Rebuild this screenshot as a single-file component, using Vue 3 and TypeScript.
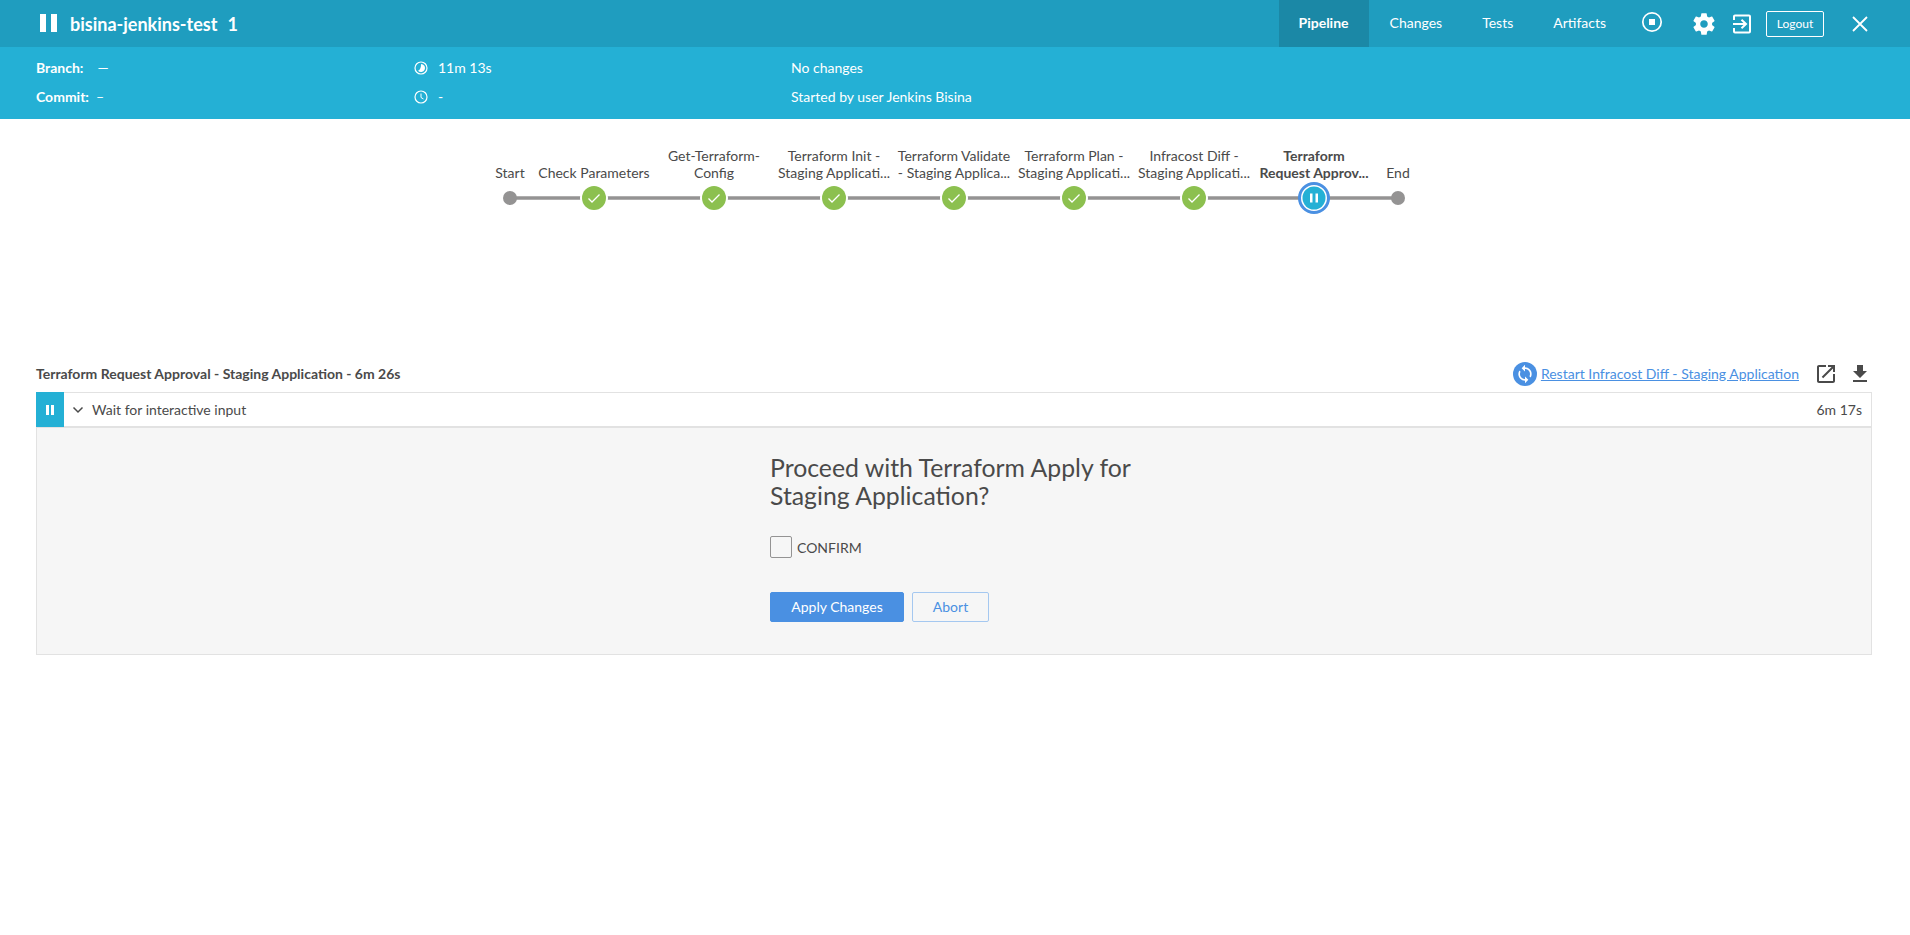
<script setup lang="ts">
interface Stage {
  x: number;
  lines: string[];
  kind: "terminal" | "done" | "paused";
}

const stages: Stage[] = [
  { x: 0, lines: ["Start"], kind: "terminal" },
  { x: 84, lines: ["Check Parameters"], kind: "done" },
  { x: 204, lines: ["Get-Terraform-", "Config"], kind: "done" },
  { x: 324, lines: ["Terraform Init -", "Staging Applicati..."], kind: "done" },
  { x: 444, lines: ["Terraform Validate", "- Staging Applica..."], kind: "done" },
  { x: 564, lines: ["Terraform Plan -", "Staging Applicati..."], kind: "done" },
  { x: 684, lines: ["Infracost Diff -", "Staging Applicati..."], kind: "done" },
  { x: 804, lines: ["Terraform", "Request Approv..."], kind: "paused" },
  { x: 888, lines: ["End"], kind: "terminal" },
];

const tabs = ["Pipeline", "Changes", "Tests", "Artifacts"];
</script>

<template>
  <div class="page">
    <header class="top">
      <div class="top-bar">
        <svg class="run-pause" width="18" height="18" viewBox="0 0 18 18">
          <rect x="0" y="0" width="6" height="18" fill="#fff" />
          <rect x="11" y="0" width="6" height="18" fill="#fff" />
        </svg>
        <h1 class="title">bisina-jenkins-test<span class="run-no">1</span></h1>
        <nav class="tabs">
          <a v-for="(t, i) in tabs" :key="t" class="tab" :class="{ active: i === 0 }">{{ t }}</a>
        </nav>
        <div class="actions">
          <svg class="stop" width="24" height="24" viewBox="0 0 24 24">
            <circle cx="12" cy="12" r="9.2" fill="none" stroke="#fff" stroke-width="1.7" />
            <rect x="9" y="9" width="6" height="6" fill="#fff" />
          </svg>
          <svg class="gear" width="26" height="26" viewBox="0 0 24 24">
            <path fill="#fff" d="M19.43 12.98c.04-.32.07-.64.07-.98s-.03-.66-.07-.98l2.11-1.65c.19-.15.24-.42.12-.64l-2-3.46c-.12-.22-.39-.3-.61-.22l-2.49 1c-.52-.4-1.08-.73-1.69-.98l-.38-2.65C14.46 2.18 14.25 2 14 2h-4c-.25 0-.46.18-.49.42l-.38 2.65c-.61.25-1.17.59-1.69.98l-2.49-1c-.23-.09-.49 0-.61.22l-2 3.46c-.13.22-.07.49.12.64l2.11 1.65c-.04.32-.07.65-.07.98s.03.66.07.98l-2.11 1.65c-.19.15-.24.42-.12.64l2 3.46c.12.22.39.3.61.22l2.49-1c.52.4 1.08.73 1.69.98l.38 2.65c.03.24.24.42.49.42h4c.25 0 .46-.18.49-.42l.38-2.65c.61-.25 1.17-.59 1.69-.98l2.49 1c.23.09.49 0 .61-.22l2-3.46c.12-.22.07-.49-.12-.64l-2.11-1.65zM12 15.5c-1.93 0-3.5-1.57-3.5-3.5s1.57-3.5 3.5-3.5 3.5 1.57 3.5 3.5-1.57 3.5-3.5 3.5z" />
          </svg>
          <svg class="login" width="20" height="20" viewBox="0 0 20 20" fill="none" stroke="#fff" stroke-width="2">
            <path d="M2 6V2.5a1 1 0 0 1 1-1h14a1 1 0 0 1 1 1v15a1 1 0 0 1-1 1H3a1 1 0 0 1-1-1V14" />
            <path d="M1 10h12M9.5 5.8 14 10l-4.500 4.200" />
          </svg>
          <button class="logout">Logout</button>
          <svg class="close" width="16" height="16" viewBox="0 0 16 16" stroke="#fff" stroke-width="1.800">
            <path d="M1 1l14 14M15 1 1 15" />
          </svg>
        </div>
      </div>
      <div class="meta">
        <div class="meta-col col-a">
          <div><b>Branch:</b><span class="dash dash-a">—</span></div>
          <div><b>Commit:</b><span class="dash">–</span></div>
        </div>
        <div class="meta-col col-b">
          <div class="with-icon">
            <svg width="14" height="14" viewBox="0 0 14 14">
              <circle cx="7" cy="7" r="6" fill="none" stroke="#fff" stroke-width="1.200" />
              <path fill="#fff" d="M7 3a4 4 0 1 1-3 6.700C6 9 7 7 7 3z" />
            </svg>
            <span>11m 13s</span>
          </div>
          <div class="with-icon">
            <svg width="14" height="14" viewBox="0 0 14 14" fill="none" stroke="#fff">
              <circle cx="7" cy="7" r="6" stroke-width="1.200" />
              <path d="M7 3.500V7.500L9.500 9" stroke-width="1" />
            </svg>
            <span>-</span>
          </div>
        </div>
        <div class="meta-col">
          <div>No changes</div>
          <div>Started by user Jenkins Bisina</div>
        </div>
      </div>
    </header>

    <section class="graph-wrap">
      <div class="graph">
        <svg class="graph-lines" width="920" height="40" viewBox="0 0 920 40">
          <line x1="16" y1="20" x2="904" y2="20" stroke="#949393" stroke-width="3.500" />
          <template v-for="s in stages" :key="s.x">
            <circle v-if="s.kind === 'terminal'" :cx="s.x + 16" cy="20" r="7" fill="#949393" />
            <g v-else-if="s.kind === 'done'">
              <circle :cx="s.x + 16" cy="20" r="14" fill="#fff" />
              <circle :cx="s.x + 16" cy="20" r="12" fill="#8cc04f" />
              <path :transform="`translate(${s.x + 16} 20)`" d="M-5.500 0.500-2 4 5.500-3.500" fill="none" stroke="#fff" stroke-width="1.300" />
            </g>
            <g v-else>
              <circle :cx="s.x + 16" cy="20" r="15" fill="#fff" />
              <circle :cx="s.x + 16" cy="20" r="14.500" fill="none" stroke="#4a90e2" stroke-width="3" />
              <circle :cx="s.x + 16" cy="20" r="11.500" fill="#24b0d5" />
              <rect :x="s.x + 12" y="15.500" width="2.500" height="9" fill="#fff" />
              <rect :x="s.x + 17.500" y="15.500" width="2.500" height="9" fill="#fff" />
            </g>
          </template>
        </svg>
        <div
          v-for="s in stages"
          :key="'l' + s.x"
          class="stage-label"
          :class="{ current: s.kind === 'paused' }"
          :style="{ left: s.x + 16 + 'px' }"
        >
          <div v-for="l in s.lines" :key="l">{{ l }}</div>
        </div>
      </div>
    </section>

    <section class="detail">
      <div class="detail-head">
        <h2 class="detail-title">Terraform Request Approval - Staging Application - 6m 26s</h2>
        <div class="detail-tools">
          <span class="restart-badge">
            <svg width="20" height="20" viewBox="0 0 24 24">
              <path fill="#fff" d="M12 4V1L8 5l4 4V6c3.310 0 6 2.690 6 6 0 1.010-.25 1.970-.7 2.800l1.460 1.460C19.540 15.030 20 13.570 20 12c0-4.420-3.580-8-8-8zm0 14c-3.310 0-6-2.690-6-6 0-1.010.25-1.970.7-2.800L5.240 7.740C4.460 8.970 4 10.430 4 12c0 4.420 3.580 8 8 8v3l4-4-4-4v3z" />
            </svg>
          </span>
          <a class="restart-link">Restart Infracost Diff - Staging Application</a>
          <svg class="tool first" width="24" height="24" viewBox="0 0 24 24">
            <path fill="#4a4a4a" d="M19 19H5V5h7V3H5c-1.110 0-2 .9-2 2v14c0 1.100.89 2 2 2h14c1.100 0 2-.9 2-2v-7h-2v7zM14 3v2h3.590l-9.830 9.830 1.410 1.410L19 6.410V10h2V3h-7z" />
          </svg>
          <svg class="tool" width="24" height="24" viewBox="0 0 24 24">
            <path fill="#4a4a4a" d="M19 9h-4V3H9v6H5l7 7 7-7zM5 18v2h14v-2H5z" />
          </svg>
        </div>
      </div>

      <div class="step">
        <div class="step-status">
          <svg width="8" height="10" viewBox="0 0 8 10">
            <rect x="0" y="0" width="3" height="10" fill="#fff" />
            <rect x="5" y="0" width="3" height="10" fill="#fff" />
          </svg>
        </div>
        <svg class="chevron" width="12" height="8" viewBox="0 0 12 8" fill="none" stroke="#4a4a4a" stroke-width="1.500">
          <path d="M1.500 1.500 6 6l4.500-4.500" />
        </svg>
        <span class="step-name">Wait for interactive input</span>
        <span class="step-time">6m 17s</span>
      </div>

      <div class="input-panel">
        <h3 class="question">Proceed with Terraform Apply for<br />Staging Application?</h3>
        <label class="confirm">
          <span class="box"></span>
          <span>CONFIRM</span>
        </label>
        <div class="buttons">
          <button class="btn primary">Apply Changes</button>
          <button class="btn secondary">Abort</button>
        </div>
      </div>
    </section>
  </div>
</template>

<style>
html,
body {
  margin: 0;
  background: #fff;
}
</style>

<style scoped>
.page {
  font-family: Lato, "Noto Sans", sans-serif;
  font-size: 14px;
  color: #4a4a4a;
  min-height: 935px;
}
.top {
  background: #24b0d5;
  color: #fff;
}
.top-bar {
  display: flex;
  align-items: center;
  height: 47px;
  background: #1f9dbf;
  padding-left: 40px;
}
.run-pause {
  margin-bottom: 2px;
}
.title {
  margin: 0 0 0 12px;
  font-size: 18px;
  font-weight: 700;
  line-height: 46px;
}
.run-no {
  margin-left: 10px;
}
.tabs {
  display: flex;
  margin-left: auto;
  height: 47px;
}
.tab {
  display: flex;
  align-items: center;
  padding: 0 20px 2px;
}
.tab.active {
  background: #1b88a6;
  font-weight: 700;
  margin-right: 1px;
}
.actions {
  display: flex;
  align-items: center;
  padding-right: 42px;
}
.stop {
  margin-left: 14px;
  margin-bottom: 4px;
}
.gear {
  margin-left: 27px;
}
.login {
  margin-left: 15px;
}
.logout {
  margin-left: 14px;
  width: 58px;
  height: 26px;
  padding: 0;
  background: transparent;
  border: 1px solid #fff;
  border-radius: 2px;
  color: #fff;
  font: 12px Lato, sans-serif;
}
.close {
  margin-left: 28px;
}
.meta {
  display: flex;
  height: 72px;
  padding: 6px 0 0 36px;
  box-sizing: border-box;
}
.meta-col {
  line-height: 29px;
}
.col-a {
  width: 378px;
}
.col-b {
  width: 377px;
}
.meta b {
  font-weight: 700;
}
.dash {
  margin-left: 7px;
}
.dash-a {
  margin-left: 14px;
}
.with-icon {
  display: flex;
  align-items: center;
  gap: 10px;
}
.graph-wrap {
  display: flex;
  height: 246px;
  padding-left: 494px;
}
.graph {
  position: relative;
  width: 920px;
  height: 100px;
}
.graph-lines {
  position: absolute;
  left: 0;
  top: 59px;
}
.stage-label {
  position: absolute;
  bottom: 38px;
  transform: translateX(-50%);
  text-align: center;
  line-height: 17px;
  white-space: nowrap;
}
.stage-label.current {
  font-weight: 700;
}
.detail {
  padding: 0 38px 0 36px;
}
.detail-head {
  display: flex;
  align-items: center;
  height: 17px;
  margin-bottom: 10px;
}
.detail-title {
  margin: 0;
  font-size: 14px;
  font-weight: 700;
}
.detail-tools {
  display: flex;
  align-items: center;
  margin-left: auto;
}
.restart-badge {
  display: flex;
  align-items: center;
  justify-content: center;
  width: 24px;
  height: 24px;
  border-radius: 50%;
  background: #4a90e2;
  margin-right: 4px;
}
.restart-link {
  color: #4a90e2;
  text-decoration: underline;
}
.tool {
  margin-left: 10px;
}
.tool.first {
  margin-left: 15px;
}
.step {
  display: flex;
  align-items: center;
  height: 36px;
  box-sizing: border-box;
  border: 1px solid #e2e2e2;
  border-left: 0;
  border-bottom: 2px solid #e2e2e2;
  background: #fff;
}
.step-status {
  display: flex;
  align-items: center;
  justify-content: center;
  width: 28px;
  height: 35px;
  background: #24b0d5;
}
.chevron {
  margin-left: 8px;
}
.step-name {
  margin-left: 8px;
}
.step-time {
  margin-left: auto;
  margin-right: 9px;
}
.input-panel {
  box-sizing: border-box;
  height: 227px;
  background: #f6f6f6;
  border: 1px solid #e2e2e2;
  border-top: 0;
  padding: 26px 0 0 733px;
}
.question {
  margin: 0;
  font-size: 24.8px;
  font-weight: 400;
  line-height: 28px;
}
.confirm {
  display: flex;
  align-items: center;
  margin-top: 26px;
  gap: 5px;
}
.box {
  width: 22px;
  height: 22px;
  box-sizing: border-box;
  border: 1px solid #949393;
  border-radius: 2px;
}
.buttons {
  display: flex;
  gap: 8px;
  margin-top: 34px;
}
.btn {
  height: 30px;
  padding: 0 0 1px;
  border-radius: 2px;
  font: 14px Lato, sans-serif;
}
.primary {
  width: 134px;
  background: #4a90e2;
  border: 1px solid #4a90e2;
  color: #fff;
}
.secondary {
  width: 77px;
  background: transparent;
  border: 1px solid #a5c8f0;
  color: #4a90e2;
}
</style>
